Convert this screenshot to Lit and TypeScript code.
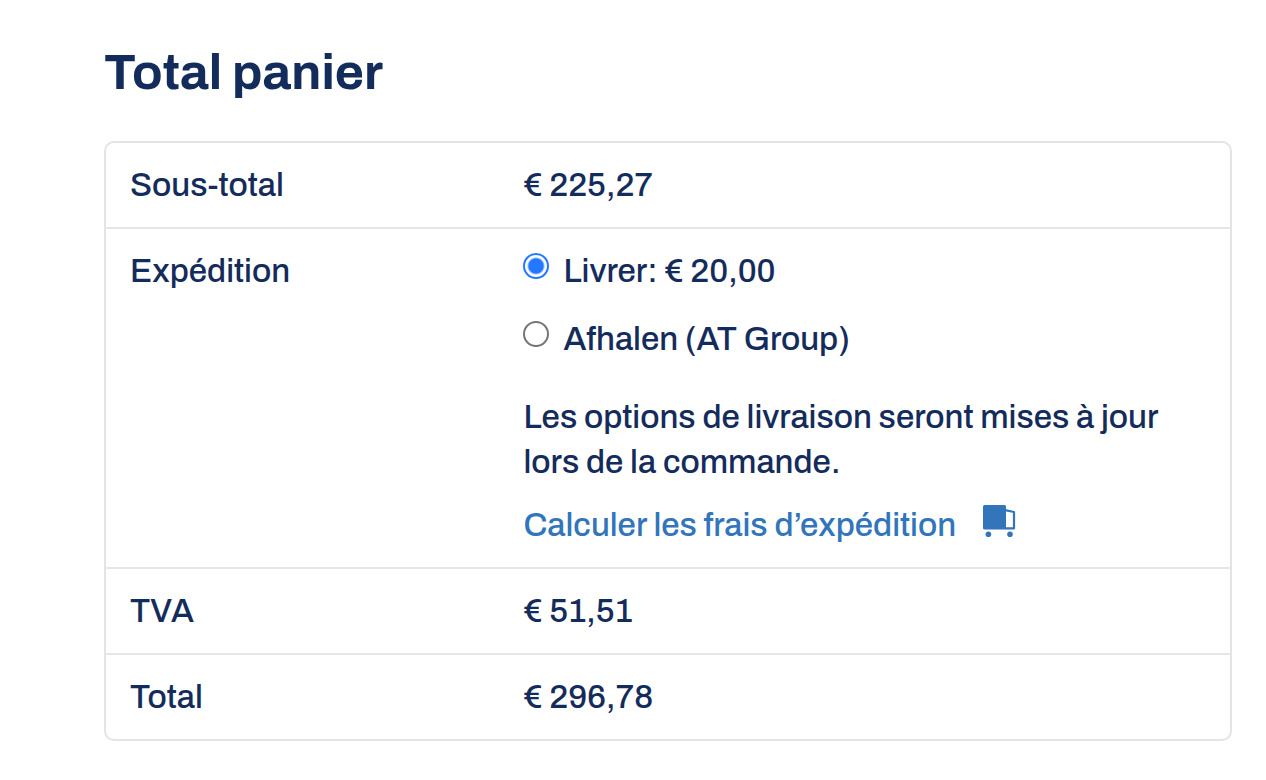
import { LitElement, html, css } from "lit";
import { customElement, state } from "lit/decorators.js";

@customElement("app-root")
export class AppRoot extends LitElement {
  static styles = css`
    :host {
      display: block;
      box-sizing: border-box;
      padding: 44px 34px 39px 104px;
      background: #fff;
      color: #142c5c;
      font-family: Archivo, "Liberation Sans", Arial, sans-serif;
      font-size: 33px;
      font-weight: 500;
      line-height: 45px;
    }
    .title {
      margin: 0 0 39px;
      font-size: 50px;
      line-height: 58px;
      font-weight: 700;
    }
    .totals {
      width: 100%;
      table-layout: fixed;
      border: 2px solid #e4e4e4;
      border-radius: 10px;
      border-spacing: 0;
    }
    .label,
    .value {
      padding: 20px 24px 19px;
      border-top: 2px solid #e5e5ea;
      text-align: left;
      vertical-align: top;
      font-weight: 500;
    }
    .label {
      width: 35%;
      box-sizing: border-box;
    }
    .first .label,
    .first .value {
      border-top: 0;
    }
    .methods {
      display: grid;
      gap: 23px;
      margin: 0;
      padding: 0;
      list-style: none;
    }
    .method {
      display: flex;
      align-items: flex-start;
      gap: 14px;
    }
    .radio {
      appearance: none;
      flex: none;
      box-sizing: border-box;
      width: 26px;
      height: 26px;
      margin: 4px 0 0;
      border: 2px solid #767676;
      border-radius: 50%;
      background: #fff;
    }
    .radio:checked {
      border-color: #2478ff;
      background: radial-gradient(circle, #2478ff 7px, #fff 9px);
    }
    .note {
      margin: 33px 0 18px;
    }
    .link {
      display: inline-flex;
      align-items: flex-start;
      gap: 26px;
      color: #3275bb;
      text-decoration: none;
    }
    .truck {
      flex: none;
      width: 34px;
      height: 34px;
      margin-top: 1px;
    }
  `;

  @state() private method = "livrer";

  private option(id: string, text: string) {
    return html`<li class="method">
      <input
        class="radio"
        type="radio"
        name="shipping"
        id=${id}
        .checked=${this.method === id}
        @change=${() => (this.method = id)}
      />
      <label for=${id}>${text}</label>
    </li>`;
  }

  render() {
    return html`
      <h2 class="title">Total panier</h2>
      <table class="totals">
        <tbody>
          <tr class="first">
            <th class="label" scope="row">Sous-total</th>
            <td class="value">€ 225,27</td>
          </tr>
          <tr>
            <th class="label" scope="row">Expédition</th>
            <td class="value">
              <ul class="methods">
                ${this.option("livrer", "Livrer: € 20,00")}
                ${this.option("afhalen", "Afhalen (AT Group)")}
              </ul>
              <p class="note">
                Les options de livraison seront mises à jour lors de la commande.
              </p>
              <a class="link" href="#">
                Calculer les frais d’expédition
                <svg class="truck" viewBox="0 0 34 34" fill="#3275bb" aria-hidden="true">
                  <rect x="1" y="1" width="23" height="24.5" rx="1.5" />
                  <path
                    d="M23 6.2 L32 8 V24.3 H23"
                    fill="none"
                    stroke="#3275bb"
                    stroke-width="2.2"
                    stroke-linejoin="round"
                  />
                  <circle cx="6.4" cy="30.2" r="2.8" />
                  <circle cx="28" cy="30.2" r="2.8" />
                </svg>
              </a>
            </td>
          </tr>
          <tr>
            <th class="label" scope="row">TVA</th>
            <td class="value">€ 51,51</td>
          </tr>
          <tr>
            <th class="label" scope="row">Total</th>
            <td class="value">€ 296,78</td>
          </tr>
        </tbody>
      </table>
    `;
  }
}
